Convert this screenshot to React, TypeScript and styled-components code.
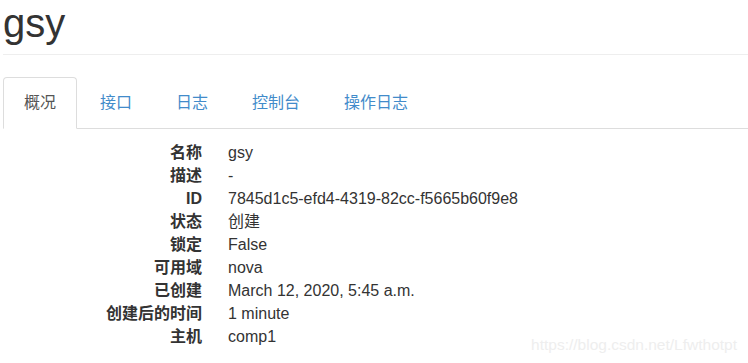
import { Fragment } from 'react';
import styled, { createGlobalStyle } from 'styled-components';

const GlobalStyle = createGlobalStyle`
	html, body {
		margin: 0;
		padding: 0;
		background: #fff;
	}
	body {
		font-family: 'Liberation Sans', Arial, 'Noto Sans CJK SC', sans-serif;
		color: #333;
	}
`;

const Page = styled.div`
	position: relative;
	width: 748px;
	height: 363px;
	overflow: hidden;
	padding: 0 0 0 3px;
	box-sizing: border-box;
`;

const PageHeader = styled.div`
	padding: 1px 0 9px;
	border-bottom: 1px solid #eee;
`;

const Title = styled.h1`
	margin: 0;
	font-size: 40px;
	line-height: 44px;
	font-weight: 400;
	color: #333;
`;

const Tabs = styled.ul`
	display: flex;
	margin: 22px 0 0;
	padding: 0;
	list-style: none;
	border-bottom: 1px solid #ddd;
`;

const Tab = styled.li<{ $active?: boolean }>`
	margin: 0 2px -1px 0;
	padding: 14px 20px;
	font-size: 16px;
	line-height: 22px;
	border: 1px solid ${(p) => (p.$active ? '#ddd' : 'transparent')};
	border-bottom-color: ${(p) => (p.$active ? '#fff' : 'transparent')};
	border-radius: 4px 4px 0 0;
	background: ${(p) => (p.$active ? '#fff' : 'transparent')};
	color: ${(p) => (p.$active ? '#555' : '#428bca')};
	cursor: pointer;
`;

const Details = styled.dl`
	display: grid;
	grid-template-columns: 199px 1fr;
	column-gap: 26px;
	margin: 12px 0 0;
	font-size: 16px;
	line-height: 23px;
`;

const Term = styled.dt`
	text-align: right;
	font-weight: 700;
	color: #333;
`;

const Value = styled.dd`
	margin: 0;
	color: #333;
`;

// csdn watermark sitting over the bottom right corner
const Watermark = styled.div`
	position: absolute;
	right: 11px;
	bottom: 9px;
	font-size: 15.5px;
	line-height: 18px;
	color: #eeeeee;
	pointer-events: none;
`;

const tabs = ['概况', '接口', '日志', '控制台', '操作日志'];

const rows: [string, string][] = [
	['名称', 'gsy'],
	['描述', '-'],
	['ID', '7845d1c5-efd4-4319-82cc-f5665b60f9e8'],
	['状态', '创建'],
	['锁定', 'False'],
	['可用域', 'nova'],
	['已创建', 'March 12, 2020, 5:45 a.m.'],
	['创建后的时间', '1 minute'],
	['主机', 'comp1']
];

const App = () => {
	return (
		<>
			<GlobalStyle />
			<Page>
				<PageHeader>
					<Title>gsy</Title>
				</PageHeader>
				<Tabs>
					{tabs.map((tab, i) => (
						<Tab key={tab} $active={i === 0}>
							{tab}
						</Tab>
					))}
				</Tabs>
				<Details>
					{rows.map(([label, value]) => (
						<Fragment key={label}>
							<Term>{label}</Term>
							<Value>{value}</Value>
						</Fragment>
					))}
				</Details>
				<Watermark>https://blog.csdn.net/Lfwthotpt</Watermark>
			</Page>
		</>
	);
};

export default App;
